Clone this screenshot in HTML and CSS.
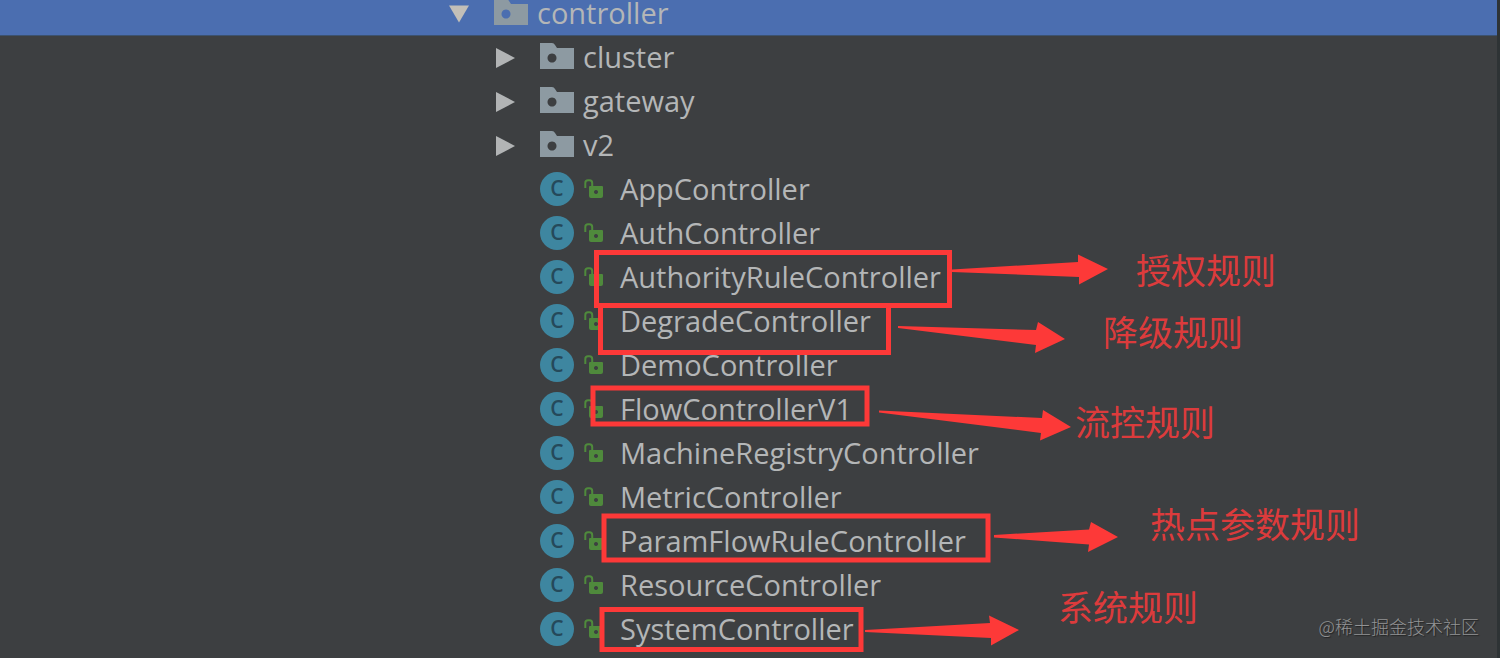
FILE: index.html
```html
<!DOCTYPE html>
<html lang="zh-CN">
<head>
<meta charset="utf-8">
<title>controller</title>
<link rel="stylesheet" href="styles.css">
</head>
<body>
<svg class="defs" aria-hidden="true">
  <symbol id="folder" viewBox="0 0 34 30"><path fill-rule="evenodd" d="M0 0H12Q14 0 15 2L17 5H34V26H0ZM12 10.500a4.500 4.500 0 1 0 .01 0Z"/></symbol>
  <symbol id="right" viewBox="0 0 20 20"><path d="M0 0L19 10L0 20Z"/></symbol>
  <symbol id="down" viewBox="0 0 20 20"><path d="M0 1.500H20L10 18.500Z"/></symbol>
  <symbol id="lock" viewBox="0 0 20 20"><path class="shackle" d="M1.300 9V4Q1.300 1.300 4 1.300H5.500Q8.200 1.300 8.200 4V8"/><path fill-rule="evenodd" d="M6 7H18Q19 7 19 8V17Q19 19 17 19H7Q5 19 5 17V8Q5 7 6 7ZM12 11a2 2 0 1 0 .01 0Z"/></symbol>
</svg>
<main class="panel">
  <ul class="tree">
    <li class="row root"><svg class="arrow"><use href="#down"/></svg><svg class="folder"><use href="#folder"/></svg><span>controller</span></li>
    <li class="row package"><svg class="arrow"><use href="#right"/></svg><svg class="folder"><use href="#folder"/></svg><span>cluster</span></li>
    <li class="row package"><svg class="arrow"><use href="#right"/></svg><svg class="folder"><use href="#folder"/></svg><span>gateway</span></li>
    <li class="row package"><svg class="arrow"><use href="#right"/></svg><svg class="folder"><use href="#folder"/></svg><span>v2</span></li>
    <li class="row class"><b class="badge">C</b><svg class="lock"><use href="#lock"/></svg><span>AppController</span></li>
    <li class="row class"><b class="badge">C</b><svg class="lock"><use href="#lock"/></svg><span>AuthController</span></li>
    <li class="row class"><b class="badge">C</b><svg class="lock"><use href="#lock"/></svg><span>AuthorityRuleController</span></li>
    <li class="row class"><b class="badge">C</b><svg class="lock"><use href="#lock"/></svg><span>DegradeController</span></li>
    <li class="row class"><b class="badge">C</b><svg class="lock"><use href="#lock"/></svg><span>DemoController</span></li>
    <li class="row class"><b class="badge">C</b><svg class="lock"><use href="#lock"/></svg><span>FlowControllerV1</span></li>
    <li class="row class"><b class="badge">C</b><svg class="lock"><use href="#lock"/></svg><span>MachineRegistryController</span></li>
    <li class="row class"><b class="badge">C</b><svg class="lock"><use href="#lock"/></svg><span>MetricController</span></li>
    <li class="row class"><b class="badge">C</b><svg class="lock"><use href="#lock"/></svg><span>ParamFlowRuleController</span></li>
    <li class="row class"><b class="badge">C</b><svg class="lock"><use href="#lock"/></svg><span>ResourceController</span></li>
    <li class="row class"><b class="badge">C</b><svg class="lock"><use href="#lock"/></svg><span>SystemController</span></li>
  </ul>
  <svg class="marks" aria-hidden="true">
    <g class="boxes">
      <rect x="596.500" y="252.500" width="353" height="53"/>
      <rect x="600.500" y="305.500" width="288" height="47"/>
      <rect x="593" y="388" width="274" height="36"/>
      <rect x="604" y="516" width="384" height="44"/>
      <rect x="602" y="609.500" width="259" height="40"/>
    </g>
    <g class="pointers">
      <path d="M952 269.500L1078 262V254.500L1108 269L1079 284.500V277L952 272Z"/>
      <path d="M898 326L1036 330L1038 322L1065 339L1035 353L1036 345L898 328Z"/>
      <path d="M879 410.500L1042 418L1043 410L1071 427L1040 440.500L1041 433L879 412.500Z"/>
      <path d="M994 535L1089 529.500L1091 522L1118 537L1088 552L1089 544.500L994 537.500Z"/>
      <path d="M865 630L990 623L989 615.500L1019 630L991 645.500V638L865 632Z"/>
    </g>
  </svg>
  <p class="note authority">授权规则</p>
  <p class="note degrade">降级规则</p>
  <p class="note flow">流控规则</p>
  <p class="note param">热点参数规则</p>
  <p class="note system">系统规则</p>
  <p class="watermark">@稀土掘金技术社区</p>
</main>
</body>
</html>
```
FILE: styles.css
```css
body {
  margin: 0;
  background: #3d3f41;
  color: #b4b6b7;
  font: 29px/40px "Open Sans", "Noto Sans", sans-serif;
  overflow: hidden;
}
.defs { position: absolute; width: 0; height: 0; }
.panel {
  position: relative;
  box-sizing: border-box;
  min-height: 100vh;
  border-right: 3px solid #2e3335;
}
.tree { margin: 0; padding: 0; list-style: none; }
.row {
  display: flex;
  align-items: center;
  box-sizing: border-box;
  height: 44px;
  white-space: nowrap;
}
.root {
  height: 36px;
  padding: 0 0 8px 449px;
  background: #4b6eb0;
  border-bottom: 1px solid #3c526f;
  line-height: 26px;
}
.package { padding-left: 496px; }
.class { padding: 0 0 2px 540px; }
.root span, .package span { padding-bottom: 2px; }
.arrow { width: 20px; height: 20px; margin-right: 24px; fill: #b2b4b5; }
.root .arrow { margin-right: 25px; fill: #c2bfb8; }
.folder { width: 34px; height: 30px; margin-right: 9px; fill: #8d9aa2; }
.badge {
  width: 34px;
  height: 34px;
  margin-right: 10px;
  border-radius: 50%;
  background: #3e86a0;
  color: #25495a;
  font-size: 21px;
  font-weight: 600;
  line-height: 32px;
  text-align: center;
}
.lock { width: 20px; height: 20px; margin-right: 16px; fill: #4f8a3c; }
.shackle { fill: none; stroke: #4f8a3c; stroke-width: 2; }
.marks { position: absolute; inset: 0; width: 100%; height: 100%; }
.boxes { fill: none; stroke: #fd3938; stroke-width: 5; }
.pointers { fill: #fd3938; }
.note {
  position: absolute;
  margin: 0;
  color: #dc3b3c;
  font: 400 35px/44px "Noto Sans CJK SC", sans-serif;
  white-space: nowrap;
}
.authority { left: 1136px; top: 247px; }
.degrade { left: 1103px; top: 309px; }
.flow { left: 1075px; top: 399px; }
.param { left: 1150px; top: 501px; }
.system { left: 1058px; top: 584px; }
.watermark {
  position: absolute;
  right: 18px;
  bottom: 19px;
  margin: 0;
  color: #929394;
  font: 300 18px/26px "Noto Sans CJK SC", sans-serif;
  text-shadow: 1px 1px 1px #222;
}
```
